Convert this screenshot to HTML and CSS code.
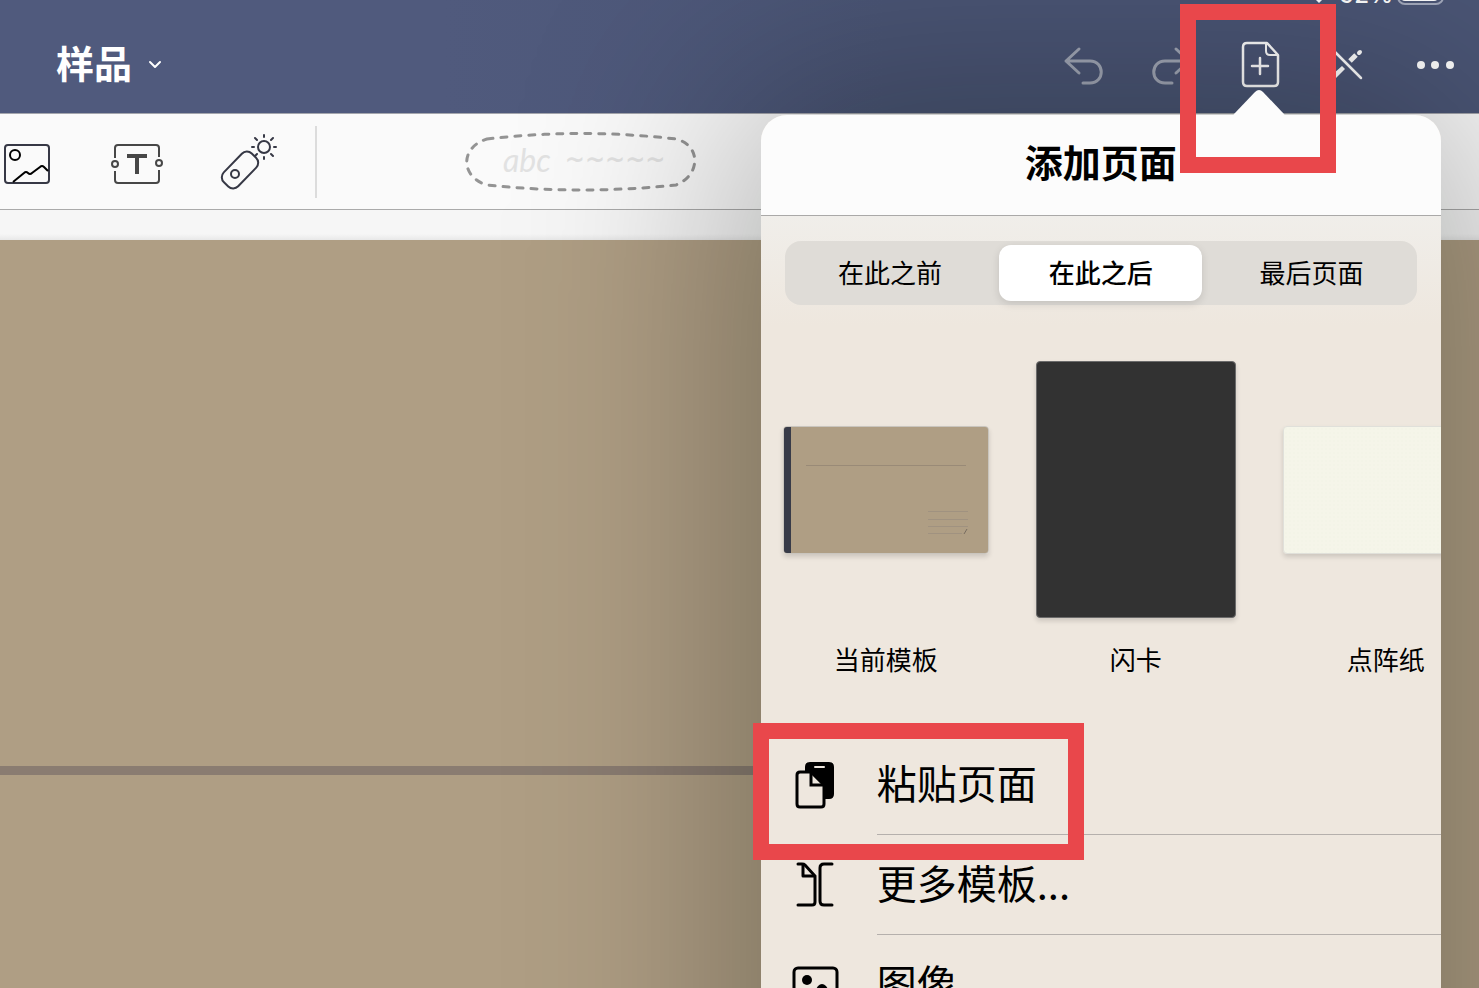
FILE: index.html
```
<!DOCTYPE html>
<html lang="zh-CN">
<head>
    <meta charset="UTF-8">
    <meta name="viewport" content="width=device-width, initial-scale=1.0">
    <title>样品</title>
    <link rel="stylesheet" href="styles.css">
</head>

<body>

<div class="app">

    <header class="header">
        <div class="status">
            <svg width="30" height="22" viewBox="0 0 30 22"><path d="M14 20 L7 13 Q14 8 21 13 Z" fill="#fff"/></svg>
            <span>92%</span>
            <svg width="50" height="24" viewBox="0 0 50 24">
                <rect x="1" y="1" width="45" height="22" rx="7" fill="none" stroke="#a3a9bc" stroke-width="2"/>
                <rect x="4" y="4" width="37" height="16" rx="4" fill="#fff"/>
            </svg>
        </div>
        <div class="nav">
            <button type="button" class="doc-title">
                <span>样品</span>
                <svg width="14" height="10" viewBox="0 0 14 10"><path d="M2 2 L7 7 L12 2" fill="none" stroke="#fff" stroke-width="2" stroke-linecap="round" stroke-linejoin="round"/></svg>
            </button>
            <div class="nav-actions">
                <button type="button" class="nav-btn faded" aria-label="撤销">
                    <svg width="48" height="48" viewBox="0 0 48 48" fill="none" stroke="currentColor" stroke-width="3" stroke-linecap="round" stroke-linejoin="round">
                        <path d="M20 8 L7 20 L20 32 M7 20 H31 C46 20 46 42 31 42 H24"/>
                    </svg>
                </button>
                <button type="button" class="nav-btn faded" aria-label="重做">
                    <svg width="48" height="48" viewBox="0 0 48 48" fill="none" stroke="currentColor" stroke-width="3" stroke-linecap="round" stroke-linejoin="round">
                        <path d="M29 8 L42 20 L29 32 M42 20 H18 C3 20 3 42 18 42 H25"/>
                    </svg>
                </button>
                <button type="button" class="nav-btn" aria-label="添加页面">
                    <svg width="48" height="48" viewBox="0 0 48 48" fill="none" stroke="currentColor" stroke-width="2.5" stroke-linecap="round" stroke-linejoin="round">
                        <path d="M32 2 H12 Q8 2 8 6 V41 Q8 45 12 45 H39 Q43 45 43 41 V14 Z"/>
                        <path d="M31 3 V10 Q31 14 35 14 H42" stroke-width="2"/>
                        <path d="M25 17 V33 M17 25 H33"/>
                    </svg>
                </button>
                <button type="button" class="nav-btn" aria-label="只读模式">
                    <svg width="48" height="48" viewBox="0 0 48 48" fill="none" stroke="currentColor">
                        <path d="M9 8 L38 37" stroke-width="2.5" stroke-linecap="round"/>
                        <path d="M22 28 L13 37 L8 39 L10 33 L19 25 Z" fill="currentColor" stroke="none"/>
                        <path d="M27 20 L33 14" stroke-width="5"/>
                        <path d="M36 12 L37 11" stroke-width="4" stroke-linecap="round"/>
                    </svg>
                </button>
                <button type="button" class="nav-btn" aria-label="更多">
                    <svg width="48" height="48" viewBox="0 0 48 48" fill="currentColor">
                        <circle cx="10" cy="24" r="4"/>
                        <circle cx="24" cy="24" r="4"/>
                        <circle cx="39" cy="24" r="4"/>
                    </svg>
                </button>
            </div>
        </div>
    </header>

    <div class="toolbar">
        <button type="button" class="tool" aria-label="图像">
            <svg width="60" height="60" viewBox="0 0 60 60" fill="none" stroke-width="2">
                <rect x="8" y="13" width="44" height="38" rx="3" stroke="#363845"/>
                <circle cx="18" cy="23" r="5" stroke="#000"/>
                <path d="M16 50 L27 41 Q29 39 31 41 Q33 43 35 41 L43 35 Q45 33 47 35 L51 39" stroke="#000"/>
            </svg>
        </button>
        <button type="button" class="tool" aria-label="文本">
            <svg width="60" height="60" viewBox="0 0 60 60" fill="none" stroke="#474747" stroke-width="2">
                <path d="M8 26 V16 Q8 13 11 13 H49 Q52 13 52 16 V25 M52 38 V48 Q52 51 49 51 H11 Q8 51 8 48 V39"/>
                <circle cx="8" cy="32" r="3"/>
                <circle cx="52" cy="31" r="3"/>
                <path d="M20 24 H40 M30 24 V42" stroke-width="4"/>
            </svg>
        </button>
        <button type="button" class="tool" aria-label="激光笔">
            <svg width="60" height="60" viewBox="0 0 60 60" fill="none" stroke="#363845" stroke-width="2" stroke-linecap="round">
                <rect x="-20" y="-10" width="40" height="20" rx="7" transform="translate(23 38) rotate(-46)"/>
                <circle cx="18" cy="42" r="4"/>
                <circle cx="47" cy="15" r="6"/>
                <path d="M47 3 V5 M47 25 V27 M35 15 H37 M57 15 H59 M38 6 L40 8 M54 22 L56 24 M56 6 L54 8 M40 22 L38 24"/>
            </svg>
        </button>
        <span class="divider"></span>
        <button type="button" class="lasso">
            <svg class="lasso-outline" viewBox="0 0 232 62" fill="none" stroke="#949494" stroke-width="3" stroke-linecap="round" stroke-dasharray="6 8">
                <path d="M22 8 Q116 -3 211 8 C236 14 236 44 211 54 Q116 64 22 54 C-5 46 -5 16 22 8 Z"/>
            </svg>
            <span>abc</span>
            <span class="scribble">~~~~~</span>
        </button>
    </div>

    <main class="canvas">
        <div class="page"></div>
        <div class="page-edge"></div>
    </main>

    <section class="popover">
        <svg class="popover-arrow" width="52" height="27" viewBox="0 0 52 27"><path d="M0 27 L1 25 L22 3 Q26 -1 30 3 L51 25 L52 27 Z" fill="#fcfcfc"/></svg>
        <h1 class="popover-title">添加页面</h1>
        <div class="popover-body">
            <div class="segments">
                <button type="button">在此之前</button>
                <button type="button" class="selected">在此之后</button>
                <button type="button">最后页面</button>
            </div>

            <div class="templates">
                <button type="button" class="template">
                    <span class="thumb-box">
                        <svg class="thumb" width="206" height="128" viewBox="0 0 206 128">
                            <rect x="0" y="0" width="206" height="128" rx="4" fill="#c9c5be"/>
                            <rect x="1" y="1" width="204" height="126" rx="3" fill="#af9e84"/>
                            <path d="M8 1 H4 Q1 1 1 4 V124 Q1 127 4 127 H8 Z" fill="#383b48"/>
                            <path d="M23 39.5 H183" stroke="#998a77"/>
                            <path d="M145 85.5 H185 M145 93.5 H185 M145 100.5 H185 M145 107.5 H179" stroke="#a09280"/>
                            <path d="M181 108 L184 103" stroke="#776c60"/>
                        </svg>
                    </span>
                    当前模板
                </button>
                <button type="button" class="template">
                    <span class="thumb-box"><span class="thumb flashcard"></span></span>
                    闪卡
                </button>
                <button type="button" class="template">
                    <span class="thumb-box"><span class="thumb dotted"></span></span>
                    点阵纸
                </button>
            </div>

            <ul class="actions">
                <li>
                    <button type="button" class="action">
                        <svg width="48" height="48" viewBox="0 0 48 48">
                            <path d="M14 11 V6 Q14 1 19 1 H38 Q43 1 43 6 V33 Q43 38 38 38 H32 V24 L20 12 Z" fill="#000"/>
                            <path d="M24 6 H33" stroke="#eee7de" stroke-width="2" stroke-linecap="round"/>
                            <path d="M20 11 H9 Q6 11 6 14 V43 Q6 46 9 46 H30 Q33 46 33 43 V24 Z" fill="#eee7de" stroke="#000" stroke-width="3"/>
                            <path d="M20 12 V24 H32" fill="none" stroke="#000" stroke-width="3"/>
                        </svg>
                        <span>粘贴页面</span>
                    </button>
                    <span class="mark mark-paste"></span>
                </li>
                <li>
                    <button type="button" class="action">
                        <svg width="48" height="48" viewBox="0 0 48 48" fill="none" stroke="#000" stroke-width="3" stroke-linecap="round">
                            <path d="M7 3 H11 Q13 3 14 4 L24 15 V41 Q24 44 21 44 H7"/>
                            <path d="M12 4 V15 H23" stroke-linejoin="round"/>
                            <path d="M41 3 H33 Q29 3 29 7 V40 Q29 44 33 44 H41"/>
                        </svg>
                        <span>更多模板...</span>
                    </button>
                </li>
                <li>
                    <button type="button" class="action">
                        <svg width="48" height="48" viewBox="0 0 48 48">
                            <rect x="3" y="7" width="43" height="38" rx="4" fill="none" stroke="#000" stroke-width="3"/>
                            <circle cx="16" cy="19" r="5"/>
                            <path d="M6 43 L15 33 L20 36 L27 25 Q31 21 35 25 L44 38 V43 Z"/>
                        </svg>
                        <span>图像</span>
                    </button>
                </li>
            </ul>
        </div>
    </section>

    <span class="mark mark-add"></span>
</div>

</body>
</html>
```

FILE: styles.css
```
* {
    box-sizing: border-box;
}

body {
    margin: 0;
    font-family: "Noto Sans CJK SC", sans-serif;
    color: #000;
}

button {
    padding: 0;
    border: none;
    background: none;
    color: inherit;
    font: inherit;
    cursor: pointer;
}

svg {
    display: block;
    flex-shrink: 0;
}

.app {
    position: relative;
    display: flex;
    flex-direction: column;
    height: 100vh;
    overflow: hidden;
}

/* header */
.header {
    background: linear-gradient(90deg, #505a7d 30%, #4b5676 60%);
    border-bottom: 1px solid #a4a6ad;
    color: #fff;
}

.status {
    display: flex;
    justify-content: flex-end;
    align-items: flex-end;
    gap: 4px;
    height: 5px;
    padding-right: 32px;
    font: 500 24px/20px Inter, sans-serif;
}

.nav {
    display: flex;
    justify-content: space-between;
    align-items: center;
    height: 108px;
    padding: 12px 0 0 56px;
}

.doc-title {
    display: flex;
    align-items: center;
    gap: 16px;
    font-size: 38px;
    font-weight: 700;
    line-height: 48px;
}

.doc-title span {
    padding-bottom: 6px;
}

.nav-actions {
    display: flex;
}

.nav-btn {
    display: flex;
    justify-content: center;
    width: 88px;
}

.faded {
    color: #a3a9b8;
}

/* toolbar */
.toolbar {
    display: flex;
    align-items: center;
    height: 96px;
    margin-left: -28px;
    background: #fafafa;
    border-bottom: 1px solid #aaa;
}

.tool {
    display: flex;
    justify-content: center;
    width: 110px;
}

.divider {
    width: 2px;
    height: 72px;
    margin-left: 13px;
    background: #dcdcdc;
}

.lasso {
    position: relative;
    display: flex;
    align-items: center;
    gap: 14px;
    width: 232px;
    height: 62px;
    margin-left: 148px;
    padding: 0 0 4px 38px;
    color: #e2e2e2;
    font: italic 32px/40px Lato, sans-serif;
}

.lasso-outline {
    position: absolute;
    inset: 0;
}

.scribble {
    font: bold 24px/40px "DejaVu Sans", sans-serif;
}

/* notebook pages */
.canvas {
    flex: 1;
    padding-top: 30px;
    background: linear-gradient(#f6f6f6 24px, #e8e8e8 30px, #af9e84 30px);
}

.page {
    height: 526px;
}

.page-edge {
    width: 90%;
    height: 9px;
    background: #8a7c71;
}

/* popover */
.popover {
    position: absolute;
    top: 115px;
    right: 38px;
    width: 46%;
    padding-bottom: 200px;
    border-radius: 26px;
    background: #eee7de;
    box-shadow: 0 0 220px 30px rgba(0, 8, 0, 0.3);
}

.popover-arrow {
    position: absolute;
    top: -26px;
    right: 156px;
}

.popover-title {
    margin: 0;
    padding-bottom: 8px;
    border-bottom: 1px solid #aaa9a8;
    border-radius: 26px 26px 0 0;
    background: #fcfcfc;
    font-size: 38px;
    font-weight: 700;
    line-height: 92px;
    text-align: center;
}

.popover-body {
    padding-top: 25px;
    background: linear-gradient(#f0eeea, #eee7de 110px);
}

.segments {
    display: flex;
    height: 64px;
    margin: 0 24px;
    padding: 4px 0;
    border-radius: 16px;
    background: #dfdcd7;
}

.segments button {
    flex: 1;
    margin: 0 4px;
    padding-bottom: 4px;
    border-radius: 12px;
    font-size: 26px;
}

.segments .selected {
    background: #fff;
    box-shadow: 0 3px 8px rgba(0, 0, 0, 0.12);
    font-weight: 500;
}

.templates {
    display: flex;
    gap: 44px;
    padding: 56px 0 58px 22px;
    overflow: hidden;
}

.template {
    display: flex;
    flex: none;
    flex-direction: column;
    align-items: center;
    gap: 23px;
    width: 206px;
    font-size: 26px;
    line-height: 36px;
}

.thumb-box {
    display: flex;
    justify-content: center;
    align-items: center;
    height: 257px;
}

.thumb {
    border-radius: 4px;
    box-shadow: 0 3px 5px rgba(0, 0, 0, 0.14);
}

.flashcard {
    width: 200px;
    height: 257px;
    border: 1px solid #6b6b6b;
    background: #323232;
}

.dotted {
    width: 206px;
    height: 128px;
    border: 1px solid #e0e0da;
    background: radial-gradient(#f3f4e7 1px, #f5f5e9 1px) 0 0 / 4px 4px;
}

.actions {
    margin: 0;
    padding: 0;
    list-style: none;
}

.actions li {
    position: relative;
}

.action {
    display: flex;
    align-items: center;
    gap: 38px;
    width: 100%;
    height: 100px;
    padding-left: 30px;
    font-size: 40px;
    text-align: left;
}

.action span {
    flex: 1;
    height: 100px;
    border-bottom: 1px solid #b5b0ac;
    line-height: 94px;
}

/* red highlight frames */
.mark {
    position: absolute;
    border: 16px solid #e9474b;
    pointer-events: none;
}

.mark-add {
    top: 4px;
    right: 143px;
    width: 156px;
    height: 169px;
}

.mark-paste {
    top: -12px;
    left: -8px;
    width: 331px;
    height: 137px;
}
```
